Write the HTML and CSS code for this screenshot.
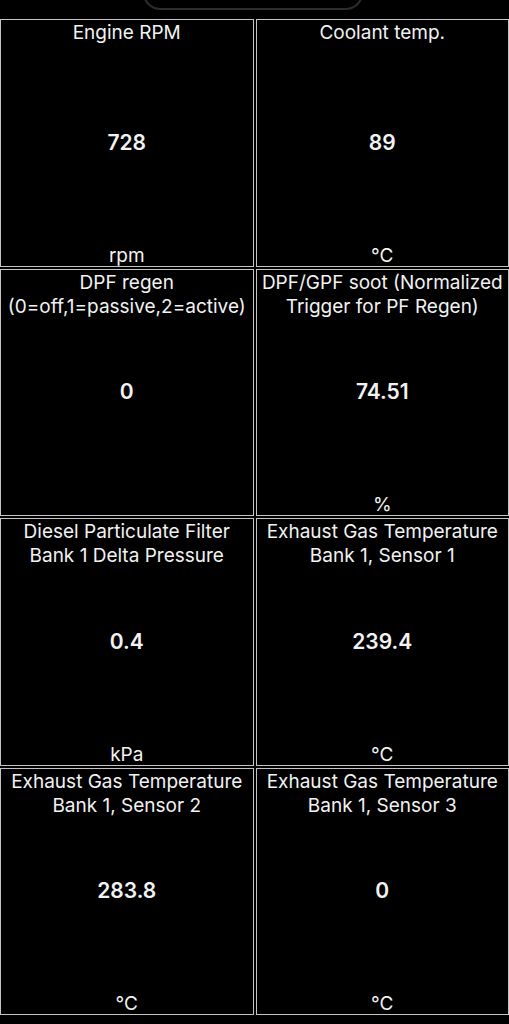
FILE: index.html
```html
<!DOCTYPE html>
<html lang="en">
<head>
<meta charset="utf-8">
<title>Dashboard</title>
<link rel="stylesheet" href="styles.css">
</head>
<body>
<div class="top">
  <div class="pill"></div>
</div>
<main class="grid">
  <section class="cell">
    <div class="title">Engine RPM</div>
    <div class="value">728</div>
    <div class="unit">rpm</div>
  </section>
  <section class="cell">
    <div class="title">Coolant temp.</div>
    <div class="value">89</div>
    <div class="unit">°C</div>
  </section>
  <section class="cell">
    <div class="title">DPF regen<br>(0=off,1=passive,2=active)</div>
    <div class="value">0</div>
    <div class="unit"></div>
  </section>
  <section class="cell">
    <div class="title">DPF/GPF soot (Normalized<br>Trigger for PF Regen)</div>
    <div class="value">74.51</div>
    <div class="unit">%</div>
  </section>
  <section class="cell">
    <div class="title">Diesel Particulate Filter<br>Bank 1 Delta Pressure</div>
    <div class="value">0.4</div>
    <div class="unit">kPa</div>
  </section>
  <section class="cell">
    <div class="title">Exhaust Gas Temperature<br>Bank 1, Sensor 1</div>
    <div class="value">239.4</div>
    <div class="unit">°C</div>
  </section>
  <section class="cell">
    <div class="title">Exhaust Gas Temperature<br>Bank 1, Sensor 2</div>
    <div class="value">283.8</div>
    <div class="unit">°C</div>
  </section>
  <section class="cell">
    <div class="title">Exhaust Gas Temperature<br>Bank 1, Sensor 3</div>
    <div class="value">0</div>
    <div class="unit">°C</div>
  </section>
</main>
</body>
</html>
```
FILE: styles.css
```css
html, body {
  margin: 0;
  padding: 0;
  background: #000;
}
body {
  width: 509px;
  height: 1024px;
  overflow: hidden;
  font-family: Inter, "Noto Sans", "Liberation Sans", sans-serif;
  color: #f2f2f2;
}
.top {
  height: 19px;
  display: flex;
  justify-content: center;
  overflow: hidden;
}
.pill {
  width: 216px;
  height: 36px;
  margin-top: -30px;
  margin-left: -3px;
  border: 2px solid #2c2c2c;
  border-radius: 17px;
  flex: none;
}
.grid {
  display: grid;
  grid-template-columns: 1fr 1fr;
  grid-template-rows: repeat(4, 247.5px);
  gap: 2px;
}
.cell {
  border: 1px solid #c4c4c4;
  display: grid;
  grid-template-rows: 1fr auto 1fr;
  text-align: center;
  min-width: 0;
}
.title {
  align-self: start;
  font-size: 19px;
  line-height: 24px;
  padding-top: 1px;
  white-space: nowrap;
}
.value {
  font-size: 21px;
  font-weight: 600;
  line-height: 24px;
}
.unit {
  align-self: end;
  font-size: 19px;
  line-height: 21px;
}
```
